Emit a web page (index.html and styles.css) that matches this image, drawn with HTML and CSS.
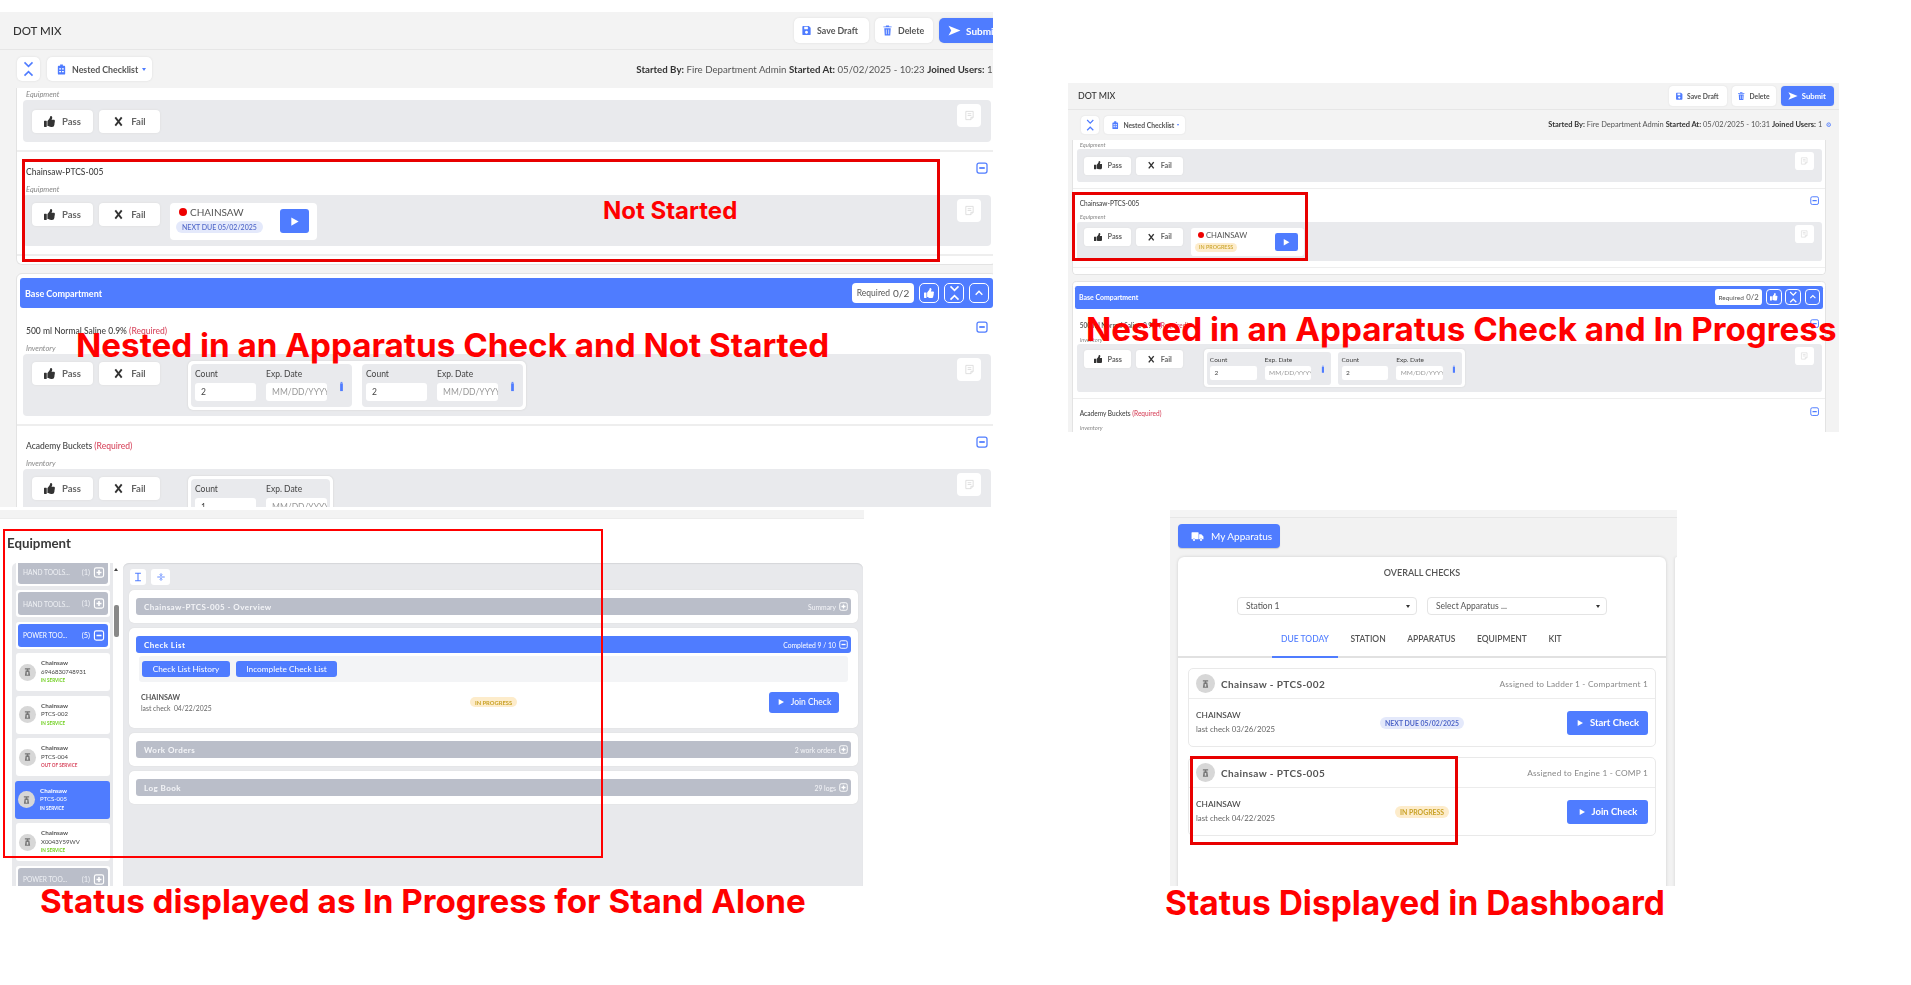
FILE: index.html
```html
<!DOCTYPE html>
<html lang="en">
<head>
<meta charset="utf-8">
<title>Check status comparison</title>
<link rel="stylesheet" href="styles.css">
</head>
<body>
<svg class="sprite" aria-hidden="true">
  <symbol id="i-thumb" viewBox="0 0 512 512"><path fill="currentColor" d="M104 224H24c-13.255 0-24 10.745-24 24v240c0 13.255 10.745 24 24 24h80c13.255 0 24-10.745 24-24V248c0-13.255-10.745-24-24-24zM384 81.452c0 42.416-25.97 66.208-33.277 94.548h101.723c33.397 0 59.397 27.746 59.553 58.098.084 17.938-7.546 37.249-19.439 49.197l-.11.11c9.836 23.337 8.237 56.037-9.308 79.469 8.681 25.895-.069 57.704-16.382 74.757 4.298 17.598 2.244 32.575-6.148 44.632C440.202 511.587 389.616 512 346.839 512l-2.845-.001c-48.287-.017-87.806-17.598-119.56-31.725-15.957-7.099-36.821-15.887-52.651-16.178-6.54-.12-11.783-5.457-11.783-11.998v-213.77c0-3.2 1.282-6.271 3.558-8.521 39.614-39.144 56.648-80.587 89.117-113.111 14.804-14.832 20.188-37.236 25.393-58.902C282.515 39.293 291.817 0 312 0c24 0 72 8 72 81.452z"/></symbol>
  <symbol id="i-x" viewBox="0 0 24 24"><path fill="none" stroke="currentColor" stroke-width="4" d="M5 3l14 18M19 3L5 21"/></symbol>
  <symbol id="i-save" viewBox="0 0 24 24"><path fill="currentColor" fill-rule="evenodd" d="M5 2h12l4 4v14a2 2 0 0 1-2 2H5a2 2 0 0 1-2-2V4a2 2 0 0 1 2-2zM7 4v5h8V4zM12 12.500a3.200 3.200 0 1 0 .01 0z"/></symbol>
  <symbol id="i-trash" viewBox="0 0 24 24"><path fill="currentColor" fill-rule="evenodd" d="M9 1h6l1 2h5v2H3V3h5zM5 7h14l-1 16H6zM8.500 10v10h1.500V10zM14 10v10h1.500V10z"/></symbol>
  <symbol id="i-send" viewBox="0 0 24 24"><path fill="currentColor" d="M1 3l22 9-22 9 5-9z"/></symbol>
  <symbol id="i-clip" viewBox="0 0 24 24"><path fill="currentColor" fill-rule="evenodd" d="M9 1h6v3h3a2 2 0 0 1 2 2v15a2 2 0 0 1-2 2H6a2 2 0 0 1-2-2V6a2 2 0 0 1 2-2h3zM7 9v3h4V9zM13 9v3h4V9zM7 15v3h4v-3zM13 15v3h4v-3z"/></symbol>
  <symbol id="i-fold" viewBox="0 0 24 36"><path fill="none" stroke="currentColor" stroke-width="3.500" d="M3 3l9 9 9-9M3 33l9-9 9 9"/></symbol>
  <symbol id="i-up" viewBox="0 0 24 24"><path fill="none" stroke="currentColor" stroke-width="3.500" d="M4 16l8-8 8 8"/></symbol>
  <symbol id="i-play" viewBox="0 0 24 24"><path fill="currentColor" d="M5 3l16 9-16 9z"/></symbol>
  <symbol id="i-plus" viewBox="0 0 24 24"><rect x="2" y="2" width="20" height="20" rx="4" fill="none" stroke="currentColor" stroke-width="2.500"/><path stroke="currentColor" stroke-width="3.500" d="M12 6.500v11M6.500 12h11"/></symbol>
  <symbol id="i-minus" viewBox="0 0 24 24"><rect x="2" y="2" width="20" height="20" rx="4" fill="none" stroke="currentColor" stroke-width="2.500"/><path stroke="currentColor" stroke-width="3.500" d="M6.500 12h11"/></symbol>
  <symbol id="i-note" viewBox="0 0 24 24"><path fill="none" stroke="currentColor" stroke-width="2" d="M4 3h16v13l-5 5H4zM8 8h8M8 12h8M15 21v-5h5"/></symbol>
  <symbol id="i-truck" viewBox="0 0 24 24"><path fill="currentColor" d="M1 5a1 1 0 0 1 1-1h11a1 1 0 0 1 1 1v12H8a3 3 0 0 0-5 0H2a1 1 0 0 1-1-1zM15 8h4l4 4v5h-2a3 3 0 0 0-5 0h-1z"/><circle fill="currentColor" cx="5.500" cy="18.500" r="2"/><circle fill="currentColor" cx="18.500" cy="18.500" r="2"/></symbol>
  <symbol id="i-saw" viewBox="0 0 24 24"><path fill="currentColor" fill-rule="evenodd" d="M5 2h14v3h-5v3h3l2 14H5L7 8h3V5H5zM10 12v7h4v-7z"/></symbol>
  <symbol id="i-eye" viewBox="0 0 24 24"><circle cx="12" cy="12" r="8" fill="none" stroke="currentColor" stroke-width="4"/><circle cx="12" cy="12" r="2.500" fill="currentColor"/></symbol>
  <symbol id="i-beam" viewBox="0 0 24 24"><path fill="none" stroke="currentColor" stroke-width="2.500" d="M5 3h14M5 21h14M12 3v18"/></symbol>
  <symbol id="i-split" viewBox="0 0 24 24"><path fill="none" stroke="currentColor" stroke-width="2" d="M3 12h18M12 3v5M9 6l3 3 3-3M12 21v-5M9 18l3-3 3 3"/></symbol>
  <symbol id="i-bin" viewBox="0 0 10 24"><rect x="2" y="5" width="6" height="17" fill="currentColor"/><rect x="3" y="2" width="4" height="2" fill="currentColor"/></symbol>
</svg>

<section class="shot shot-a">
  <div class="sheet">
    <header class="sheet-head">
      <h1 class="sheet-title">DOT MIX</h1>
      <div class="head-actions">
        <button class="tool tool-save"><svg class="ic ic-blue"><use href="#i-save"/></svg>Save Draft</button>
        <button class="tool tool-del"><svg class="ic ic-blue"><use href="#i-trash"/></svg>Delete</button>
        <button class="tool tool-submit"><svg class="ic ic-send"><use href="#i-send"/></svg>Submit</button>
      </div>
    </header>
    <div class="sheet-bar">
      <button class="tool tool-fold"><svg class="ic ic-blue ic-fold"><use href="#i-fold"/></svg></button>
      <button class="tool tool-nest"><svg class="ic ic-blue"><use href="#i-clip"/></svg>Nested Checklist<i class="caret caret-blue"></i></button>
      <p class="info"><b>Started By:</b> Fire Department Admin <b>Started At:</b> 05/02/2025 - 10:23 <b>Joined Users:</b> 1 <svg class="ic-eye"><use href="#i-eye"/></svg></p>
    </div>
    <div class="sheet-body">
      <div class="card card-tail">
        <div class="row row-cut">
          <div class="kind">Equipment</div>
          <div class="box">
            <button class="vote"><svg class="ic-vote"><use href="#i-thumb"/></svg>Pass</button>
            <button class="vote"><svg class="ic-vote"><use href="#i-x"/></svg>Fail</button>
            <button class="notes"><svg class="ic-note"><use href="#i-note"/></svg></button>
          </div>
        </div>
        <div class="row">
          <div class="row-head"><span class="row-title">Chainsaw-PTCS-005</span><svg class="ic-minus"><use href="#i-minus"/></svg></div>
          <div class="kind">Equipment</div>
          <div class="box">
            <button class="vote"><svg class="ic-vote"><use href="#i-thumb"/></svg>Pass</button>
            <button class="vote"><svg class="ic-vote"><use href="#i-x"/></svg>Fail</button>
            <div class="sub">
              <div class="sub-text">
                <div class="sub-name"><i class="alert"></i>CHAINSAW</div>
                <span class="pill pill-due">NEXT DUE 05/02/2025</span>
              </div>
              <button class="run"><svg class="ic-run"><use href="#i-play"/></svg></button>
            </div>
            <button class="notes"><svg class="ic-note"><use href="#i-note"/></svg></button>
          </div>
        </div>
      </div>
      <div class="card">
        <div class="band">
          <span class="band-title">Base Compartment</span>
          <span class="req">Required <b>0/2</b></span>
          <button class="band-btn"><svg class="ic-band-t"><use href="#i-thumb"/></svg></button>
          <button class="band-btn band-btn-fold"><svg class="ic-band-f"><use href="#i-fold"/></svg></button>
          <button class="band-btn"><svg class="ic-band-u"><use href="#i-up"/></svg></button>
        </div>
        <div class="row">
          <div class="row-head"><span class="row-title">500 ml Normal Saline 0.9% <em>(Required)</em></span><svg class="ic-minus"><use href="#i-minus"/></svg></div>
          <div class="kind">Inventory</div>
          <div class="box">
            <button class="vote"><svg class="ic-vote"><use href="#i-thumb"/></svg>Pass</button>
            <button class="vote"><svg class="ic-vote"><use href="#i-x"/></svg>Fail</button>
            <div class="lots">
              <div class="lot">
                <div class="field"><label>Count</label><div class="inp">2</div></div>
                <div class="field"><label>Exp. Date</label><div class="inp inp-ph">MM/DD/YYYY</div></div>
                <svg class="ic-bin"><use href="#i-bin"/></svg>
              </div>
              <div class="lot">
                <div class="field"><label>Count</label><div class="inp">2</div></div>
                <div class="field"><label>Exp. Date</label><div class="inp inp-ph">MM/DD/YYYY</div></div>
                <svg class="ic-bin"><use href="#i-bin"/></svg>
              </div>
            </div>
            <button class="notes"><svg class="ic-note"><use href="#i-note"/></svg></button>
          </div>
        </div>
        <div class="row">
          <div class="row-head"><span class="row-title">Academy Buckets <em>(Required)</em></span><svg class="ic-minus"><use href="#i-minus"/></svg></div>
          <div class="kind">Inventory</div>
          <div class="box">
            <button class="vote"><svg class="ic-vote"><use href="#i-thumb"/></svg>Pass</button>
            <button class="vote"><svg class="ic-vote"><use href="#i-x"/></svg>Fail</button>
            <div class="lots">
              <div class="lot">
                <div class="field"><label>Count</label><div class="inp">1</div></div>
                <div class="field"><label>Exp. Date</label><div class="inp inp-ph">MM/DD/YYYY</div></div>
              </div>
            </div>
            <button class="notes"><svg class="ic-note"><use href="#i-note"/></svg></button>
          </div>
        </div>
      </div>
    </div>
  </div>
</section>

<section class="shot shot-b">
  <div class="sheet sheet-b">
    <header class="sheet-head">
      <h1 class="sheet-title">DOT MIX</h1>
      <div class="head-actions">
        <button class="tool tool-save"><svg class="ic ic-blue"><use href="#i-save"/></svg>Save Draft</button>
        <button class="tool tool-del"><svg class="ic ic-blue"><use href="#i-trash"/></svg>Delete</button>
        <button class="tool tool-submit"><svg class="ic ic-send"><use href="#i-send"/></svg>Submit</button>
      </div>
    </header>
    <div class="sheet-bar">
      <button class="tool tool-fold"><svg class="ic ic-blue ic-fold"><use href="#i-fold"/></svg></button>
      <button class="tool tool-nest"><svg class="ic ic-blue"><use href="#i-clip"/></svg>Nested Checklist<i class="caret caret-blue"></i></button>
      <p class="info"><b>Started By:</b> Fire Department Admin <b>Started At:</b> 05/02/2025 - 10:31 <b>Joined Users:</b> 1 <svg class="ic-eye"><use href="#i-eye"/></svg></p>
    </div>
    <div class="sheet-body">
      <div class="card card-tail">
        <div class="row row-cut">
          <div class="kind">Equipment</div>
          <div class="box">
            <button class="vote"><svg class="ic-vote"><use href="#i-thumb"/></svg>Pass</button>
            <button class="vote"><svg class="ic-vote"><use href="#i-x"/></svg>Fail</button>
            <button class="notes"><svg class="ic-note"><use href="#i-note"/></svg></button>
          </div>
        </div>
        <div class="row">
          <div class="row-head"><span class="row-title">Chainsaw-PTCS-005</span><svg class="ic-minus"><use href="#i-minus"/></svg></div>
          <div class="kind">Equipment</div>
          <div class="box">
            <button class="vote"><svg class="ic-vote"><use href="#i-thumb"/></svg>Pass</button>
            <button class="vote"><svg class="ic-vote"><use href="#i-x"/></svg>Fail</button>
            <div class="sub">
              <div class="sub-text">
                <div class="sub-name"><i class="alert"></i>CHAINSAW</div>
                <span class="pill pill-prog">IN PROGRESS</span>
              </div>
              <button class="run"><svg class="ic-run"><use href="#i-play"/></svg></button>
            </div>
            <button class="notes"><svg class="ic-note"><use href="#i-note"/></svg></button>
          </div>
        </div>
      </div>
      <div class="card">
        <div class="band">
          <span class="band-title">Base Compartment</span>
          <span class="req">Required <b>0/2</b></span>
          <button class="band-btn"><svg class="ic-band-t"><use href="#i-thumb"/></svg></button>
          <button class="band-btn band-btn-fold"><svg class="ic-band-f"><use href="#i-fold"/></svg></button>
          <button class="band-btn"><svg class="ic-band-u"><use href="#i-up"/></svg></button>
        </div>
        <div class="row">
          <div class="row-head"><span class="row-title">500 ml Normal Saline 0.9% <em>(Required)</em></span><svg class="ic-minus"><use href="#i-minus"/></svg></div>
          <div class="kind">Inventory</div>
          <div class="box">
            <button class="vote"><svg class="ic-vote"><use href="#i-thumb"/></svg>Pass</button>
            <button class="vote"><svg class="ic-vote"><use href="#i-x"/></svg>Fail</button>
            <div class="lots">
              <div class="lot">
                <div class="field"><label>Count</label><div class="inp">2</div></div>
                <div class="field"><label>Exp. Date</label><div class="inp inp-ph">MM/DD/YYYY</div></div>
                <svg class="ic-bin"><use href="#i-bin"/></svg>
              </div>
              <div class="lot">
                <div class="field"><label>Count</label><div class="inp">2</div></div>
                <div class="field"><label>Exp. Date</label><div class="inp inp-ph">MM/DD/YYYY</div></div>
                <svg class="ic-bin"><use href="#i-bin"/></svg>
              </div>
            </div>
            <button class="notes"><svg class="ic-note"><use href="#i-note"/></svg></button>
          </div>
        </div>
        <div class="row">
          <div class="row-head"><span class="row-title">Academy Buckets <em>(Required)</em></span><svg class="ic-minus"><use href="#i-minus"/></svg></div>
          <div class="kind">Inventory</div>
        </div>
      </div>
    </div>
  </div>
</section>

<section class="shot shot-c">
  <div class="c-strip"></div>
  <h2 class="c-title">Equipment</h2>
  <div class="c-split">
    <aside class="side">
      <div class="side-list">
        <div class="group"><div class="group-in"><span>HAND TOOLS...</span><span class="group-n">(1)</span><svg class="ic-grp"><use href="#i-plus"/></svg></div></div>
        <div class="group"><div class="group-in"><span>HAND TOOLS...</span><span class="group-n">(1)</span><svg class="ic-grp"><use href="#i-plus"/></svg></div></div>
        <div class="group"><div class="group-in group-on"><span>POWER TOO...</span><span class="group-n">(5)</span><svg class="ic-grp"><use href="#i-minus"/></svg></div></div>
        <div class="unit"><span class="ava"><svg><use href="#i-saw"/></svg></span><div class="unit-t"><b>Chainsaw</b><span>6946830748931</span><small class="ok">IN SERVICE</small></div></div>
        <div class="unit"><span class="ava"><svg><use href="#i-saw"/></svg></span><div class="unit-t"><b>Chainsaw</b><span>PTCS-002</span><small class="ok">IN SERVICE</small></div></div>
        <div class="unit"><span class="ava"><svg><use href="#i-saw"/></svg></span><div class="unit-t"><b>Chainsaw</b><span>PTCS-004</span><small class="bad">OUT OF SERVICE</small></div></div>
        <div class="unit unit-on"><span class="ava"><svg><use href="#i-saw"/></svg></span><div class="unit-t"><b>Chainsaw</b><span>PTCS-005</span><small>IN SERVICE</small></div></div>
        <div class="unit"><span class="ava"><svg><use href="#i-saw"/></svg></span><div class="unit-t"><b>Chainsaw</b><span>X0043Y59WV</span><small class="ok">IN SERVICE</small></div></div>
        <div class="group"><div class="group-in"><span>POWER TOO...</span><span class="group-n">(1)</span><svg class="ic-grp"><use href="#i-plus"/></svg></div></div>
      </div>
      <div class="scroll"><i class="scroll-up"></i><i class="scroll-thumb"></i></div>
    </aside>
    <main class="pane">
      <div class="pane-tools">
        <button class="ptool ptool-a"><svg><use href="#i-beam"/></svg></button>
        <button class="ptool ptool-b"><svg><use href="#i-split"/></svg></button>
      </div>
      <div class="sect">
        <div class="sbar"><b>Chainsaw-PTCS-005 - Overview</b><span>Summary</span><svg><use href="#i-plus"/></svg></div>
      </div>
      <div class="sect">
        <div class="sbar sbar-on"><b>Check List</b><span>Completed 9 / 10</span><svg><use href="#i-minus"/></svg></div>
        <div class="sect-btns"><button class="lnk lnk-a">Check List History</button><button class="lnk lnk-b">Incomplete Check List</button></div>
        <div class="chk">
          <div class="chk-t"><b>CHAINSAW</b><span>last check &nbsp;04/22/2025</span></div>
          <span class="pill pill-prog pill-c">IN PROGRESS</span>
          <button class="go go-c"><svg><use href="#i-play"/></svg>Join Check</button>
        </div>
      </div>
      <div class="sect">
        <div class="sbar"><b>Work Orders</b><span>2 work orders</span><svg><use href="#i-plus"/></svg></div>
      </div>
      <div class="sect">
        <div class="sbar"><b>Log Book</b><span>29 logs</span><svg><use href="#i-plus"/></svg></div>
      </div>
    </main>
  </div>
</section>

<section class="shot shot-d">
  <button class="my"><svg><use href="#i-truck"/></svg>My Apparatus</button>
  <div class="d-cols">
    <div class="d-card">
      <h2 class="d-title">OVERALL CHECKS</h2>
      <div class="d-selects">
        <div class="sel">Station 1<i class="caret"></i></div>
        <div class="sel">Select Apparatus ...<i class="caret"></i></div>
      </div>
      <nav class="tabs">
        <span class="tab tab-on">DUE TODAY</span><span class="tab">STATION</span><span class="tab">APPARATUS</span><span class="tab">EQUIPMENT</span><span class="tab">KIT</span>
      </nav>
      <article class="due">
        <div class="due-head"><span class="ava ava-d"><svg><use href="#i-saw"/></svg></span><b>Chainsaw - PTCS-002</b><span class="due-to">Assigned to Ladder 1 - Compartment 1</span></div>
        <div class="due-body">
          <div class="due-t"><b>CHAINSAW</b><span>last check 03/26/2025</span></div>
          <span class="pill pill-due pill-d">NEXT DUE 05/02/2025</span>
          <button class="go go-d"><svg><use href="#i-play"/></svg>Start Check</button>
        </div>
      </article>
      <article class="due">
        <div class="due-head"><span class="ava ava-d"><svg><use href="#i-saw"/></svg></span><b>Chainsaw - PTCS-005</b><span class="due-to">Assigned to Engine 1 - COMP 1</span></div>
        <div class="due-body">
          <div class="due-t"><b>CHAINSAW</b><span>last check 04/22/2025</span></div>
          <span class="pill pill-prog pill-d">IN PROGRESS</span>
          <button class="go go-d"><svg><use href="#i-play"/></svg>Join Check</button>
        </div>
      </article>
    </div>
    <div class="d-next"></div>
  </div>
</section>

<div class="mark mark-a"></div>
<div class="mark mark-b"></div>
<div class="mark mark-c"></div>
<div class="mark mark-d"></div>
<p class="note note-started">Not Started</p>
<p class="note note-a">Nested in an Apparatus Check and Not Started</p>
<p class="note note-b">Nested in an Apparatus Check and In Progress</p>
<p class="note note-c">Status displayed as In Progress for Stand Alone</p>
<p class="note note-d">Status Displayed in Dashboard</p>
</body>
</html>
```
FILE: styles.css
```css
* { box-sizing: border-box; }
html, body { margin: 0; padding: 0; }
body {
  position: relative;
  width: 1911px;
  height: 985px;
  overflow: hidden;
  background: #fff;
  font-family: Lato, "Open Sans", sans-serif;
  color: #444;
}
button { font: inherit; color: inherit; border: 0; padding: 0; background: none; }
h1, h2, p { margin: 0; font-weight: inherit; }
.sprite { position: absolute; width: 0; height: 0; }

/* pasted screenshots on the slide canvas */
.shot { position: absolute; overflow: hidden; filter: blur(.35px); }
.shot-a { left: 0; top: 12px; width: 993px; height: 495px; }
.shot-b { left: 1068px; top: 83px; width: 771px; height: 349px; }
.shot-c { left: 0; top: 510px; width: 864px; height: 376px; display: flex; flex-direction: column; background: #fff; }
.shot-d { left: 1170px; top: 510px; width: 507px; height: 376px; background: #f2f2f2; border-top: 7px solid #f4f4f4; padding: 7px 0 0 8px; box-shadow: inset 0 1px 0 #e6e6e6; }

/* check sheet */
.sheet { width: 1014px; background: #f3f3f3; }
.sheet-b { width: 1001px; zoom: .77; }
.sheet-head { height: 38px; display: flex; align-items: center; justify-content: space-between; padding: 0 6px 0 13px; background: #f3f3f3; border-bottom: 1px solid #e6e6e6; }
.sheet-b .sheet-head { height: 35px; }
.sheet-title { font-size: 11.500px; font-weight: 500; color: #333; }
.head-actions { display: flex; gap: 6px; }
.tool { display: flex; align-items: center; gap: 5px; height: 25px; padding: 0 7px; background: #fff; border-radius: 5px; box-shadow: 0 0 2px #d8d8d8; font-size: 8.800px; font-weight: 700; color: #555; white-space: nowrap; }
.tool-save { width: 75px; }
.tool-del { width: 58px; }
.tool-submit { width: 69px; background: #4f7cff; color: #fff; font-size: 10px; padding: 0 9px; }
.tool-fold { width: 23px; height: 24px; justify-content: center; padding: 0; }
.tool-nest { width: 105px; height: 24px; padding: 0 9px; }
.ic { width: 11px; height: 11px; flex: none; }
.ic-blue { color: #4f7cff; }
.ic-send { width: 13px; height: 13px; color: #fff; }
.ic-fold { height: 16px; }
.caret { display: inline-block; width: 0; height: 0; border: 2.500px solid transparent; border-top: 3px solid #333; border-bottom: 0; }
.caret-blue { border-top-color: #4f7cff; margin-left: -1px; }
.sheet-bar { height: 38px; display: flex; align-items: center; gap: 7px; padding: 0 10px 0 17px; background: #f3f3f3; }
.sheet-b .sheet-bar { height: 39px; }
.info { margin-left: auto; font-size: 9.700px; color: #555; white-space: nowrap; }
.info b { color: #333; font-weight: 700; }
.ic-eye { width: 7px; height: 7px; color: #4f7cff; margin-left: 2px; }
.sheet-body { padding: 0 17px 0 16px; background: #f3f3f3; }
.sheet-b .sheet-body { padding: 0 16px 0 5px; }
.card { background: #fff; border: 1px solid #e3e3e3; border-radius: 6px; margin-bottom: 8px; }
.card-tail { border-top: 0; border-radius: 0 0 6px 6px; padding-bottom: 8px; }
.row { padding: 10px 5px 8px 6px; border-bottom: 2px solid #eee; }
.row-cut { padding-top: 1px; }
.row-cut .box { padding-top: 10px; }
.row-head { height: 22px; display: flex; justify-content: space-between; align-items: flex-start; }
.row-title { font-size: 8.500px; font-weight: 500; color: #444; padding: 4.500px 0 0 3px; }
.row-title em { font-style: normal; color: #d8485f; }
.ic-minus { width: 12px; height: 12px; color: #4f7cff; margin-right: 3px; }
.kind { height: 11px; line-height: 11px; padding-left: 3px; font-size: 7.500px; font-style: italic; color: #888; }
.box { display: flex; align-items: flex-start; gap: 6px; min-height: 42px; padding: 8px 10px 6px 9px; background: #e9eaed; border-radius: 4px; }
.vote { display: flex; align-items: center; justify-content: center; gap: 7px; width: 61px; height: 23px; background: #fff; border-radius: 4px; box-shadow: 0 0 2px #d8d8d8; font-size: 9.500px; font-weight: 700; color: #666; }
.ic-vote { width: 11px; height: 11px; color: #333; }
.notes { display: flex; align-items: center; justify-content: center; width: 24px; height: 23px; margin: -4px 0 0 auto; background: #fff; border-radius: 4px; }
.row-cut .notes { margin-top: -6px; }
.ic-note { width: 11px; height: 13px; color: #ddd; }
.sub { display: flex; align-items: flex-start; justify-content: space-between; width: 147px; height: 37px; margin-left: 4px; padding: 3px 8px 0 6px; background: #fff; border-radius: 4px; }
.sub-text { display: flex; flex-direction: column; align-items: flex-start; gap: 3px; }
.sub-name { display: flex; align-items: center; gap: 3px; font-size: 10px; color: #555; }
.alert { width: 8px; height: 8px; border-radius: 50%; background: #e00; margin-left: 3px; }
.run { display: flex; align-items: center; justify-content: center; width: 29px; height: 24px; margin-top: 3px; background: #4f7cff; border-radius: 3px; }
.ic-run { width: 11px; height: 11px; color: #fff; }
.pill { display: inline-flex; align-items: center; border-radius: 7px; font-weight: 700; white-space: nowrap; }
.pill-due { padding: 2px 6px; background: #e4e9fb; color: #4f66c8; font-size: 7px; font-weight: 500; }
.pill-prog { padding: 2px 5px; background: #fdeccb; color: #c9a227; font-size: 7px; font-weight: 500; }
.lots { display: flex; gap: 10px; margin: -1px 0 0 22px; padding: 3px; background: #fff; border-radius: 5px; box-shadow: 0 0 2px #ccc; }
.lot { display: flex; gap: 10px; width: 161px; height: 43px; padding: 5px 4px; background: #e9eaed; border-radius: 4px; }
.lot:only-child { width: 139px; }
.field { width: 61px; flex: none; }
.field label { display: block; height: 14px; font-size: 8.500px; color: #444; line-height: 11px; }
.inp { height: 18px; line-height: 18px; padding: 0 6px; background: #fff; border-radius: 3px; font-size: 8.500px; color: #444; overflow: hidden; white-space: nowrap; }
.inp-ph { color: #999; }
.ic-bin { width: 5px; height: 11px; color: #4f7cff; margin-top: 12px; margin-left: 2px; }
.band { display: flex; align-items: center; gap: 5px; height: 30px; margin: 4px 3px 3px; padding: 0 4px 0 5px; background: #4f7cff; border-radius: 3px; }
.band-title { margin-right: auto; font-size: 9px; font-weight: 700; color: #fff; }
.req { display: flex; align-items: center; justify-content: center; gap: 3px; width: 62px; height: 20px; background: #fff; border-radius: 4px; font-size: 8.500px; color: #555; }
.req b { font-size: 10px; font-weight: 400; }
.band-btn { display: flex; align-items: center; justify-content: center; width: 20px; height: 20px; border: 1px solid #fff; border-radius: 5px; color: #fff; }
.ic-band-t { width: 10px; height: 10px; }
.ic-band-f { width: 11px; height: 16px; }
.ic-band-u { width: 10px; height: 10px; }

/* standalone equipment page */
.c-strip { flex: none; height: 9px; background: #f3f3f3; border-bottom: 1px solid #ececec; }
.c-title { flex: none; height: 44px; padding: 9px 0 0 7px; font-size: 13.300px; font-weight: 700; color: #3a3a3a; line-height: 30px; }
.c-split { flex: 1; min-height: 0; display: flex; gap: 3px; padding: 0 1px 0 12px; }
.side { flex: none; width: 108px; display: flex; background: #e8e9ec; border-radius: 5px 0 0 0; overflow: hidden; }
.side-list { width: 101px; display: flex; flex-direction: column; gap: 4.500px; margin-top: -4.500px; padding: 0 3px 0 4px; }
.scroll { width: 7px; background: #fff; }
.scroll-up { display: block; width: 0; height: 0; margin: 5px 0 0 1px; border: 2.500px solid transparent; border-bottom: 3px solid #444; border-top: 0; }
.scroll-thumb { display: block; width: 5px; height: 32px; margin: 34px 0 0 1px; background: #888; border-radius: 2px; }
.group { flex: none; height: 27px; padding: 2px; background: #fff; border-radius: 3px; }
.group-in { display: flex; align-items: center; height: 23px; padding: 0 3px 0 5px; background: #babec9; border-radius: 3px; color: #eef0f4; font-size: 6.600px; }
.group-on { background: #4f7cff; color: #fff; }
.group-n { margin-left: auto; margin-right: 3px; font-size: 7.500px; }
.ic-grp { width: 12px; height: 11px; color: #fff; }
.unit { flex: none; display: flex; align-items: center; gap: 5px; height: 38px; padding: 0 3px; background: #fff; border-radius: 3px; }
.unit-on { background: #4f7cff; color: #fff; margin-left: -1px; }
.ava { flex: none; display: flex; align-items: center; justify-content: center; width: 17px; height: 17px; border-radius: 50%; background: #d7d7d7; color: #777; }
.ava svg { width: 9px; height: 10px; }
.unit-t { display: flex; flex-direction: column; font-size: 6px; line-height: 8.500px; color: #444; }
.unit-t b { font-weight: 700; font-size: 6.300px; color: #555; }
.unit-t small { font-size: 4.600px; font-weight: 700; color: #fff; }
.unit-t .ok { color: #6fcf1f; }
.unit-t .bad { color: #d8485f; }
.unit-on .unit-t, .unit-on .unit-t b { color: #fff; }
.pane { flex: 1; min-width: 0; padding: 6px 5px 0 6px; background: #e8e9ec; border-radius: 6px 6px 0 0; box-shadow: inset 0 1px 1px #d5d6da; }
.pane-tools { display: flex; gap: 5px; height: 16px; margin: 0 0 5px 1px; }
.ptool { display: flex; align-items: center; justify-content: center; height: 16px; background: #fff; border-radius: 3px; color: #4f7cff; }
.ptool svg { width: 10px; height: 10px; }
.ptool-a { width: 16px; }
.ptool-b { width: 19px; }
.sect { margin-bottom: 5px; padding: 8px 7px; background: #fff; border-radius: 5px; box-shadow: 0 0 1px #ccc; }
.sbar { display: flex; align-items: center; gap: 3px; height: 17px; padding: 0 3px 0 8px; background: #babec9; border-radius: 3px; color: #f4f5f8; }
.sbar b { margin-right: auto; font-size: 8px; letter-spacing: .45px; font-weight: 700; }
.sbar span { font-size: 6.800px; }
.sbar svg { width: 9px; height: 9px; color: #fff; }
.sbar-on { background: #4f7cff; color: #fff; }
.sect-btns { display: flex; gap: 6px; height: 26px; margin: 3px 3px 0; padding: 5px 3px; background: #f3f4f6; border-radius: 3px; }
.lnk { height: 16px; background: #4f7cff; border-radius: 3px; color: #fff; font-size: 8.300px; }
.lnk-a { width: 88px; }
.lnk-b { width: 101px; }
.chk { display: flex; align-items: center; height: 40px; margin-bottom: -2px; padding: 0 12px 0 5px; }
.chk-t { display: flex; flex-direction: column; gap: 2px; width: 329px; font-size: 6.800px; color: #666; }
.chk-t b { font-size: 7.200px; font-weight: 700; color: #555; }
.pill-c { justify-content: center; width: 47px; height: 10px; padding: 0; font-size: 5.800px; font-weight: 700; }
.go { display: flex; align-items: center; justify-content: center; gap: 6px; border-radius: 3px; background: #4f7cff; color: #fff; font-weight: 500; }
.go svg { width: 8px; height: 8px; }
.go-c { width: 70px; height: 21px; margin-left: auto; font-size: 8.500px; }

/* dashboard */
.my { display: flex; align-items: center; gap: 6px; width: 102px; height: 24px; padding-left: 12px; background: #4f7cff; border-radius: 4px; color: #fff; font-size: 10px; box-shadow: 0 1px 1px #ccc; }
.my svg { width: 15px; height: 13px; }
.d-cols { display: flex; gap: 9px; margin-top: 9px; height: 340px; }
.d-card { flex: none; width: 488px; background: #fff; border-radius: 6px 6px 0 0; box-shadow: 0 0 3px #ccc; }
.d-next { flex: 1; background: #fff; border-radius: 6px 0 0 0; box-shadow: 0 0 3px #ccc; }
.d-title { margin-top: 10px; height: 12px; line-height: 12px; text-align: center; font-size: 9px; font-weight: 600; color: #555; }
.d-selects { display: flex; justify-content: center; gap: 10px; margin-top: 18px; }
.sel { display: flex; align-items: center; justify-content: space-between; width: 180px; height: 18px; padding: 0 6px 0 8px; background: #fff; border: 1px solid #e4e4e4; border-radius: 4px; font-size: 8.500px; color: #555; }
.tabs { display: flex; gap: 3.500px; height: 43px; padding: 15px 0 0 94px; border-bottom: 2px solid #e1e1e1; }
.tab { height: 28px; padding: 4px 9px 0; font-size: 8.500px; font-weight: 600; color: #555; }
.tab-on { color: #4f7cff; border-bottom: 2px solid #4f7cff; font-weight: 500; }
.due { margin: 10px 10px 0; height: 79px; background: #fff; border: 1px solid #e9e9e9; border-radius: 5px; }
.due-head { display: flex; align-items: center; height: 30px; padding: 0 7px; border-bottom: 1px solid #ececec; }
.due-head b { margin-left: 6px; font-size: 10px; font-weight: 700; letter-spacing: .4px; color: #555; }
.due-to { margin-left: auto; font-size: 8.300px; color: #888; letter-spacing: .2px; }
.ava-d { width: 19px; height: 19px; }
.due-body { display: grid; grid-template-columns: 1fr auto 1fr; align-items: center; height: 47px; padding: 0 7px; }
.due-t { display: flex; flex-direction: column; gap: 4px; padding-bottom: 2px; font-size: 7.800px; color: #666; }
.due-t b { font-size: 8.300px; font-weight: 500; color: #444; }
.pill-d { padding: 0 5px; height: 12px; font-size: 6.900px; font-weight: 700; }
.go-d { justify-self: end; width: 81px; height: 24px; font-size: 9.500px; font-weight: 700; }

/* annotations drawn over the pasted screenshots */
.mark { position: absolute; border: 3px solid #e80000; }
.mark-a { left: 22px; top: 159px; width: 918px; height: 103px; }
.mark-b { left: 1072px; top: 192px; width: 236px; height: 69px; }
.mark-c { left: 3px; top: 529px; width: 600px; height: 329px; border-color: #f00; border-width: 2.500px; }
.mark-d { left: 1190px; top: 756px; width: 268px; height: 89px; }
.note { position: absolute; margin: 0; color: #f00; font-family: Inter, "Open Sans", sans-serif; font-weight: 700; white-space: nowrap; line-height: 1; }
.note-started { left: 603px; top: 199px; font-size: 24px; }
.note-a { left: 76px; top: 329px; font-size: 33.200px; }
.note-b { left: 1086px; top: 313px; font-size: 33.200px; }
.note-c { left: 40px; top: 885px; font-size: 33.200px; }
.note-d { left: 1165px; top: 887px; font-size: 33.500px; }
```
